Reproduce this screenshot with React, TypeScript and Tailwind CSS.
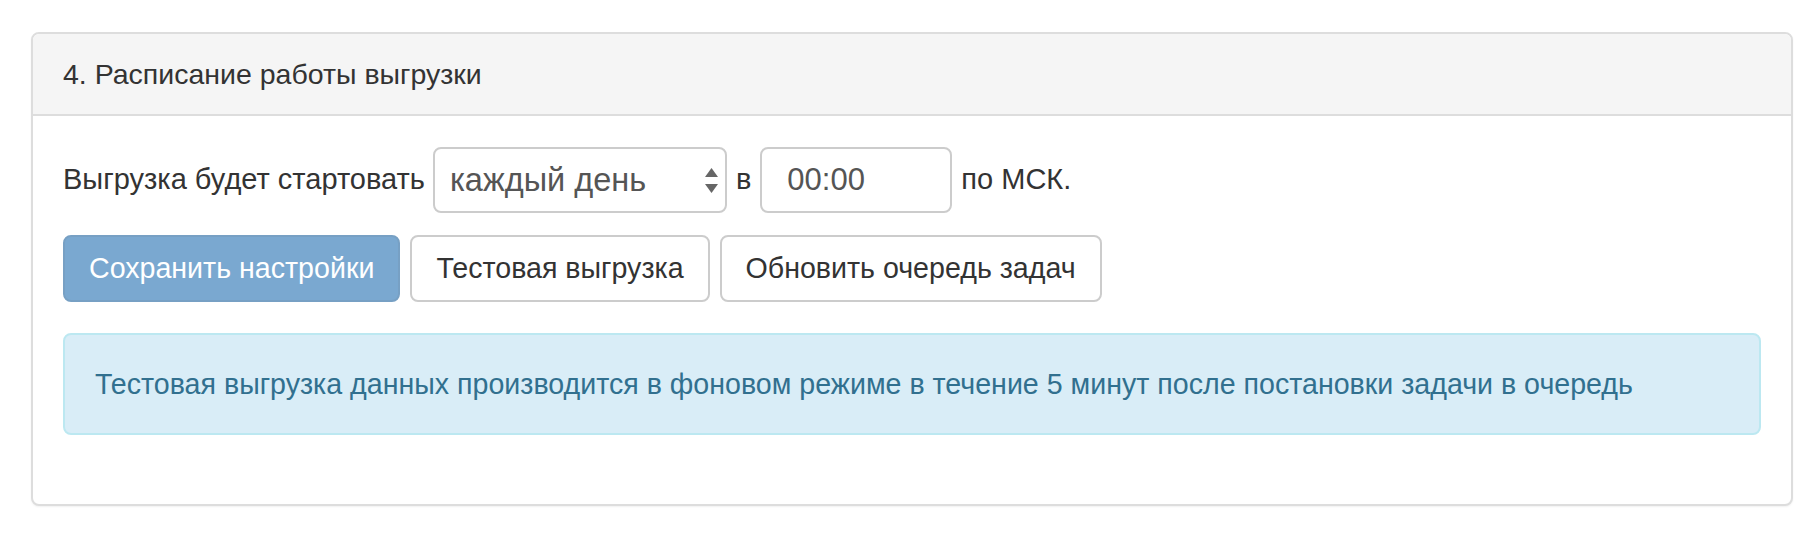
import React from "react";

export default function App() {
  return (
    <div
      className="bg-white min-h-[536px] pt-[32px] pl-[31px] pr-[25px] text-[#333]"
      style={{ fontFamily: '"Liberation Sans", Arial, Helvetica, sans-serif' }}
    >
      <div className="h-[474px] border-2 border-[#dddddd] rounded-[8px] shadow-[0_1px_2px_rgba(0,0,0,0.06)] bg-white">
        <div className="h-[82px] bg-[#f5f5f5] border-b-2 border-[#dddddd] rounded-t-[6px] px-[30px] flex items-center text-[28.5px] leading-none">
          4. Расписание работы выгрузки
        </div>
        <div className="px-[30px] pt-[31px]">
          <div className="flex items-center h-[66px] text-[29px]">
            <span>Выгрузка будет стартовать</span>
            <div className="relative ml-[8px] w-[294px] h-[66px]">
              <select
                className="appearance-none w-full h-full border-2 border-[#cccccc] rounded-[8px] bg-white pl-[15px] text-[32.5px] text-[#555] outline-none"
                style={{ fontFamily: '"Liberation Sans", Arial, sans-serif' }}
                defaultValue="day"
              >
                <option value="day">каждый день</option>
              </select>
              <svg
                className="absolute right-[9px] top-[21px] pointer-events-none"
                width="13"
                height="26"
                viewBox="0 0 13 26"
              >
                <path d="M6.5 0 L13 9 L0 9 Z" fill="#666" />
                <path d="M6.5 25 L13 16 L0 16 Z" fill="#666" />
              </svg>
            </div>
            <span className="ml-[9px] mr-[9px]">в</span>
            <input
              readOnly
              value="00:00"
              className="w-[192px] h-[66px] border-2 border-[#cccccc] rounded-[8px] bg-white pl-[25px] text-[31px] text-[#555] outline-none"
              style={{ fontFamily: '"Liberation Sans", Arial, sans-serif' }}
            />
            <span className="ml-[9px]">по МСК.</span>
          </div>
          <div className="mt-[22px] flex gap-[10px] text-[28.6px]">
            <button className="h-[67px] px-[24px] rounded-[8px] border-2 border-[#77a0c4] bg-[#7aa8d0] text-white leading-none">
              Сохранить настройки
            </button>
            <button className="h-[67px] px-[24px] rounded-[8px] border-2 border-[#cccccc] bg-white text-[#333] leading-none">
              Тестовая выгрузка
            </button>
            <button className="h-[67px] px-[24px] rounded-[8px] border-2 border-[#cccccc] bg-white text-[#333] leading-none">
              Обновить очередь задач
            </button>
          </div>
          <div className="mt-[31px] h-[102px] border-2 border-[#bce8f1] bg-[#d9edf7] rounded-[8px] pl-[30px] flex items-center text-[28.6px] text-[#31708f]">
            Тестовая выгрузка данных производится в фоновом режиме в течение 5 минут после постановки задачи в очередь
          </div>
        </div>
      </div>
    </div>
  );
}
